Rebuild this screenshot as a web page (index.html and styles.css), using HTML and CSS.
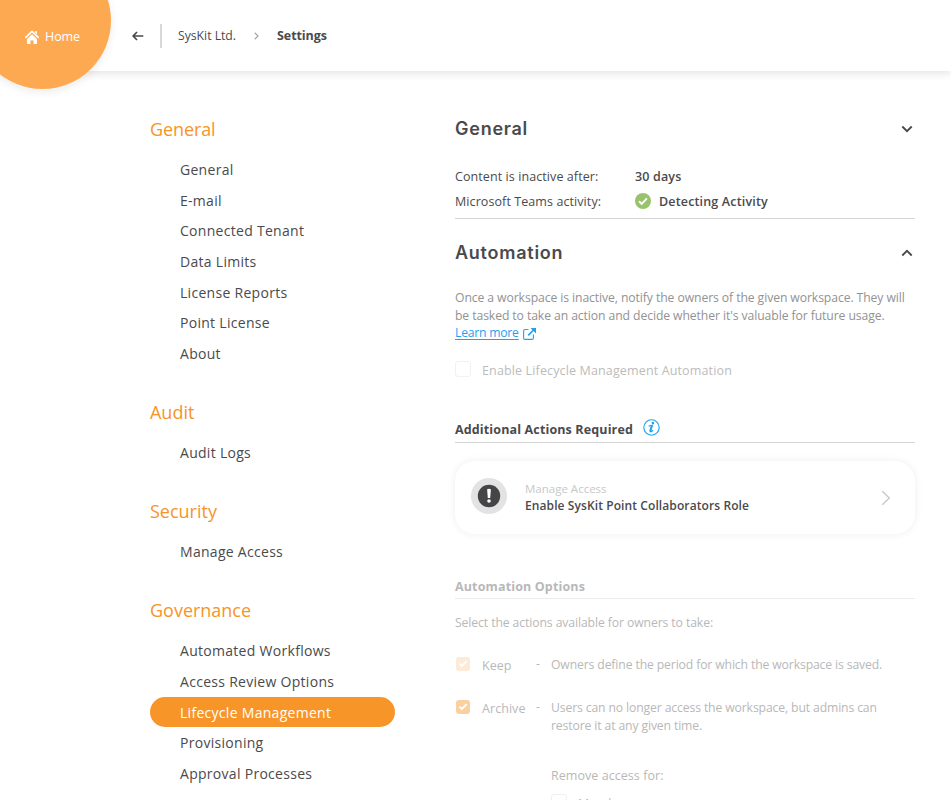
FILE: index.html
```
<!DOCTYPE html>
<html lang="en">
<head>
<meta charset="utf-8">
<title>Settings</title>
<link rel="stylesheet" href="styles.css">
</head>
<body>
<header class="topbar">
  <a class="home">
    <svg width="14" height="14" viewBox="0 0 14 14"><path d="M.8 7.3 7 1.4l6.2 5.9" fill="none" stroke="#fff" stroke-width="1.8" stroke-linecap="round" stroke-linejoin="round"/><path d="M10 1.2h2v3l-2-1.8z" fill="#fff"/><path d="M2 8.9 7 4.2l5 4.7v4.2q0 .9-.9.9H8.6v-3.4H5.4V14H2.9Q2 14 2 13.100z" fill="#fff"/></svg>
    <span>Home</span>
  </a>
  <nav class="crumbs">
    <svg class="back" width="12" height="10" viewBox="0 0 12 10"><path d="M11.300 5H1.500M5 1 1.100 5 5 9" fill="none" stroke="#4a4a4c" stroke-width="1.700"/></svg>
    <span class="divider"></span>
    <span class="crumb">SysKit Ltd.</span>
    <svg class="sep" width="5" height="8" viewBox="0 0 5 8"><path d="M.7.8 4 4 .7 7.200" fill="none" stroke="#a8a8a8" stroke-width="1.200"/></svg>
    <span class="crumb current">Settings</span>
  </nav>
</header>
<div class="page">
  <aside class="sidebar">
    <section class="group">
      <h2 class="group-title">General</h2>
      <a class="item">General</a>
      <a class="item">E-mail</a>
      <a class="item">Connected Tenant</a>
      <a class="item">Data Limits</a>
      <a class="item">License Reports</a>
      <a class="item">Point License</a>
      <a class="item">About</a>
    </section>
    <section class="group">
      <h2 class="group-title wide">Audit</h2>
      <a class="item">Audit Logs</a>
    </section>
    <section class="group">
      <h2 class="group-title wide">Security</h2>
      <a class="item">Manage Access</a>
    </section>
    <section class="group">
      <h2 class="group-title wide">Governance</h2>
      <a class="item">Automated Workflows</a>
      <a class="item">Access Review Options</a>
      <a class="item active">Lifecycle Management</a>
      <a class="item">Provisioning</a>
      <a class="item">Approval Processes</a>
    </section>
  </aside>
  <main class="content">
    <section class="summary">
      <div class="section-head">
        <h1 class="title">General</h1>
        <svg width="12" height="8" viewBox="0 0 12 8"><path d="M1.300 1.500 6 6.100l4.700-4.600" fill="none" stroke="#4a4a4c" stroke-width="1.900"/></svg>
      </div>
      <div class="fact"><span class="fact-name">Content is inactive after:</span><span class="fact-value">30 days</span></div>
      <div class="fact"><span class="fact-name">Microsoft Teams activity:</span>
        <svg class="ok" width="16" height="16" viewBox="0 0 16 16"><circle cx="8" cy="8" r="8" fill="#98c36c"/><path d="m4 8.300 2.700 2.600 5.200-5.600" fill="none" stroke="#fff" stroke-width="1.900"/></svg>
        <span class="fact-value status">Detecting Activity</span></div>
    </section>
    <section>
      <div class="section-head second">
        <h1 class="title">Automation</h1>
        <svg width="12" height="8" viewBox="0 0 12 8"><path d="M1.300 6.500 6 1.900l4.700 4.600" fill="none" stroke="#4a4a4c" stroke-width="1.900"/></svg>
      </div>
      <p class="intro">Once a workspace is inactive, notify the owners of the given workspace. They will<br>be tasked to take an action and decide whether it's valuable for future usage.</p>
      <div class="learn"><a class="link">Learn more</a>
        <svg width="13" height="12" viewBox="0 0 13 12"><path d="M5.500 1.500H2Q.6 1.500.6 3v7q0 1.400 1.400 1.400h7q1.400 0 1.400-1.400V6.500" fill="none" stroke="#1ea2ee" stroke-width="1.100"/><path d="M5.200 7.300 11 1.500" stroke="#1ea2ee" stroke-width="1.700"/><path d="M7.500 0H13v5.500z" fill="#1ea2ee"/></svg>
      </div>
      <label class="enable"><span class="box"></span><span>Enable Lifecycle Management Automation</span></label>
      <div class="subhead"><span>Additional Actions Required</span>
        <svg width="17" height="17" viewBox="0 0 17 17"><circle cx="8.500" cy="8.500" r="7.700" fill="none" stroke="#1ea2ee" stroke-width="1.100"/><circle cx="9.900" cy="4.100" r="1.300" fill="#1ea2ee"/><path d="M5.700 7.200q1.700-.9 3.500-.9L7.600 11.800q-.3 1.300.6 1 .8-.3 1.800-1.600" fill="none" stroke="#1ea2ee" stroke-width="1.100"/><path d="M8.900 6.300 7.100 12.700" stroke="#1ea2ee" stroke-width="2"/></svg>
      </div>
      <article class="card">
        <svg width="36" height="36" viewBox="0 0 36 36"><circle cx="18" cy="18" r="18" fill="#e3e3e3"/><circle cx="18" cy="18" r="11.200" fill="#454548"/><path d="M16.100 11.300q1.900-1 3.800 0L19.200 20h-2.400z" fill="#fff"/><circle cx="18" cy="23" r="1.800" fill="#fff"/></svg>
        <div class="card-text"><div class="card-kicker">Manage Access</div><div class="card-title">Enable SysKit Point Collaborators Role</div></div>
        <svg class="go" width="10" height="16" viewBox="0 0 10 16"><path d="M1.300 1.200 8.300 8l-7 6.800" fill="none" stroke="#c8c8c8" stroke-width="1.400"/></svg>
      </article>
    </section>
    <section class="options">
      <h3 class="options-head">Automation Options</h3>
      <p class="options-lead">Select the actions available for owners to take:</p>
      <div class="option">
        <span class="check faint"><svg width="14" height="14" viewBox="0 0 14 14"><path d="m3.400 6.600 2.500 2.400 4.700-4.800" fill="none" stroke="#fff" stroke-width="1.800"/></svg></span>
        <span class="option-name">Keep</span><span class="dash">-</span>
        <p class="option-text">Owners define the period for which the workspace is saved.</p>
      </div>
      <div class="option">
        <span class="check"><svg width="14" height="14" viewBox="0 0 14 14"><path d="m3.400 6.600 2.500 2.400 4.700-4.800" fill="none" stroke="#fff" stroke-width="1.800"/></svg></span>
        <span class="option-name">Archive</span><span class="dash">-</span>
        <p class="option-text">Users can no longer access the workspace, but admins can<br>restore it at any given time.</p>
      </div>
      <div class="remove">
        <div class="remove-title">Remove access for:</div>
        <label class="enable member"><span class="box"></span><span>Members</span></label>
      </div>
    </section>
  </main>
</div>
</body>
</html>
```
FILE: styles.css
```
* { box-sizing: border-box; }
html, body { height: 100%; }
body {
  margin: 0;
  overflow: hidden;
  background: #fff;
  color: #4a4a4c;
  font-family: "Open Sans", "Noto Sans", sans-serif;
  font-size: 12.5px;
}
h1, h2, h3, p { margin: 0; }
svg { display: block; flex: none; }

.topbar {
  position: relative;
  display: flex;
  height: 71px;
  padding-left: 132px;
  box-shadow: 0 3px 8px rgba(0, 0, 0, .1);
}
.home {
  position: absolute;
  left: -26px;
  top: -48px;
  display: flex;
  align-items: center;
  gap: 6px;
  width: 137px;
  height: 137px;
  padding: 32px 0 0 51px;
  border-radius: 50%;
  background: #fda951;
  box-shadow: 0 3px 8px rgba(0, 0, 0, .08);
  color: #fff;
  letter-spacing: -.08px;
}
.crumbs { display: flex; align-items: center; height: 71px; white-space: nowrap; }
.divider { width: 2px; height: 24px; margin: 0 16px; background: #d8d8d8; }
.crumb { font-size: 12.2px; }
.sep { margin: 1px 18px 0; }
.current { font-size: 12.5px; font-weight: 700; letter-spacing: -.08px; }

.page { display: flex; padding: 44px 36px 0 150px; }
.sidebar { width: 245px; margin-right: 60px; flex: none; }
.group { margin-bottom: 29.5px; }
.group-title {
  margin-bottom: 10.4px;
  color: #f79428;
  font-size: 18px;
  font-weight: 400;
  line-height: 28.6px;
  letter-spacing: -.1px;
}
.wide { letter-spacing: -.01px; }
.item {
  display: block;
  height: 30.67px;
  padding-left: 30px;
  border-radius: 16px;
  font-size: 14px;
  line-height: 31px;
  letter-spacing: .29px;
}
.active { background: #f89528; color: #fff; }

.content { width: 460px; flex: none; white-space: nowrap; }
.summary { height: 104px; border-bottom: 1px solid #d5d5d5; }
.section-head {
  display: flex;
  align-items: center;
  justify-content: space-between;
  height: 28px;
  margin-bottom: 21px;
  padding-right: 2px;
}
.second { margin: 20px 0 22px; }
.title { font-family: Inter, sans-serif; font-size: 18px; font-weight: 600; line-height: 28px; letter-spacing: .75px; }
.fact { display: flex; align-items: center; height: 25px; }
.fact-name { width: 180px; letter-spacing: .085px; }
.fact-value { font-weight: 600; letter-spacing: .16px; }
.ok { margin-top: -1px; }
.status { margin-left: 8px; }
.intro { color: #929292; font-size: 12.2px; line-height: 17.7px; letter-spacing: -.09px; }
.learn { display: flex; align-items: center; gap: 4px; height: 16px; }
.learn svg { margin-top: 4px; }
.link { color: #1ea2ee; font-size: 12.2px; letter-spacing: -.23px; text-decoration: underline; text-underline-offset: 2px; }
.enable { display: flex; align-items: center; height: 20px; margin-top: 20px; color: #bcbcbc; letter-spacing: .14px; }
.box { width: 16px; height: 16px; margin: -2px 11px 0 0; border: 1px solid #f1f1f1; border-radius: 3px; }
.subhead {
  display: flex;
  align-items: center;
  gap: 10px;
  height: 27px;
  margin-top: 36px;
  border-bottom: 1px solid #d5d5d5;
  font-weight: 700;
  letter-spacing: .136px;
}
.subhead svg { margin-top: -4px; }
.card {
  display: flex;
  align-items: center;
  height: 73px;
  margin-top: 18px;
  padding: 0 24px 3px 16px;
  border-radius: 20px;
  box-shadow: 0 0 8px rgba(0, 0, 0, .07);
}
.card-text { flex: 1; margin-left: 18px; padding-top: 2px; line-height: 17.7px; }
.card-kicker { color: #c8c8c8; font-size: 11.5px; }
.card-title { font-size: 12px; font-weight: 600; letter-spacing: .096px; }
.go { margin-top: 3px; }

.options { margin-top: 41px; color: #b8b8b8; }
.options-head { height: 24px; border-bottom: 1px solid #ebebeb; font-size: 12.5px; line-height: 24px; letter-spacing: .137px; }
.options-lead { margin-bottom: 24px; font-size: 12.2px; line-height: 48px; height: 34px; letter-spacing: -.095px; }
.option { display: flex; align-items: flex-start; min-height: 43px; }
.check { width: 14px; height: 14px; margin: 0 12px 0 1px; border-radius: 3px; background: #fbd0a0; }
.faint { background: #fdebd8; }
.option-name { width: 54px; line-height: 18px; letter-spacing: .06px; }
.dash { width: 15px; line-height: 13px; }
.option-text { margin-top: -1px; font-size: 12.2px; line-height: 18px; letter-spacing: -.125px; }
.remove { margin: 23px 0 0 96px; }
.remove-title { line-height: 20px; letter-spacing: .053px; }
.member { margin-top: 7px; }
```
